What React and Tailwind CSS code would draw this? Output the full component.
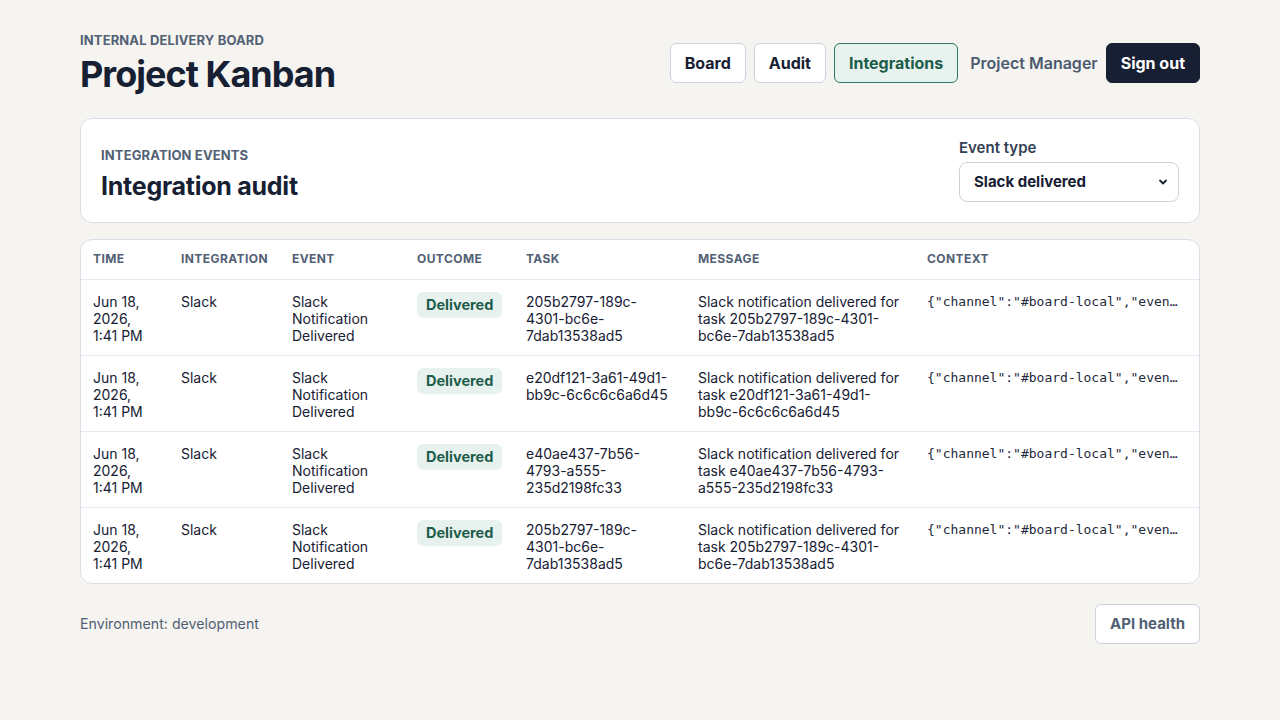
import React from "react";

const rows = [
  {
    task: "205b2797-189c-4301-bc6e-7dab13538ad5",
    taskLines: ["205b2797-189c-", "4301-bc6e-", "7dab13538ad5"],
    msgLines: ["Slack notification delivered for", "task 205b2797-189c-4301-", "bc6e-7dab13538ad5"],
  },
  {
    task: "e20df121-3a61-49d1-bb9c-6c6c6c6a6d45",
    taskLines: ["e20df121-3a61-49d1-", "bb9c-6c6c6c6a6d45"],
    msgLines: ["Slack notification delivered for", "task e20df121-3a61-49d1-", "bb9c-6c6c6c6a6d45"],
  },
  {
    task: "e40ae437-7b56-4793-a555-235d2198fc33",
    taskLines: ["e40ae437-7b56-", "4793-a555-", "235d2198fc33"],
    msgLines: ["Slack notification delivered for", "task e40ae437-7b56-4793-", "a555-235d2198fc33"],
  },
  {
    task: "205b2797-189c-4301-bc6e-7dab13538ad5",
    taskLines: ["205b2797-189c-", "4301-bc6e-", "7dab13538ad5"],
    msgLines: ["Slack notification delivered for", "task 205b2797-189c-4301-", "bc6e-7dab13538ad5"],
  },
];

function Lines({ lines }) {
  return lines.map((l, i) => (
    <div key={i} className="whitespace-nowrap">
      {l}
    </div>
  ));
}

export default function App() {
  return (
    <div
      className="min-h-screen bg-[#f5f4f1] text-[#172033]"
      style={{ fontFamily: "Inter, 'Noto Sans', sans-serif" }}
    >
      <div className="mx-auto w-[1120px] pt-8 pb-10">
        <header className="flex items-center justify-between">
          <div>
            <div className="text-[13px] leading-4 font-bold uppercase tracking-[0.01em] text-[#526074]">
              Internal delivery board
            </div>
            <h1 className="mt-1.5 text-[36px] leading-10 font-bold tracking-[-0.027em] text-[#172033]">
              Project Kanban
            </h1>
          </div>
          <nav className="flex items-center gap-2 text-[16px] font-bold">
            <button className="h-10 px-[14px] rounded-md border border-[#cdd3dc] bg-white text-[#172033]">
              Board
            </button>
            <button className="h-10 px-[14px] rounded-md border border-[#cdd3dc] bg-white text-[#172033]">
              Audit
            </button>
            <button className="h-10 px-[14px] rounded-md border border-[#2f7a66] bg-[#e8f3ef] text-[#1b5c4a]">
              Integrations
            </button>
            <span className="ml-1 text-[#4c5a6e] font-semibold">Project Manager</span>
            <button className="h-10 px-[14px] rounded-md bg-[#172033] text-white border border-[#172033]">
              Sign out
            </button>
          </nav>
        </header>

        <section className="mt-6 flex items-end justify-between rounded-xl border border-[#d8dee8] bg-white px-5 pt-[19px] pb-5">
          <div>
            <div className="text-[13px] leading-4 font-bold uppercase tracking-[0.01em] text-[#526074]">
              Integration events
            </div>
            <h2 className="mt-[7px] text-[25px] leading-8 font-bold tracking-[-0.01em] text-[#172033]">
              Integration audit
            </h2>
          </div>
          <div className="flex flex-col">
            <label className="text-[15px] leading-5 font-semibold text-[#334155]">Event type</label>
            <div className="relative mt-1 h-10 w-[220px] rounded-lg border border-[#cbd2dc] bg-white">
              <div className="flex h-full items-center px-[14px] text-[15px] font-bold text-[#172033]">
                Slack delivered
              </div>
              <svg
                className="absolute right-[10px] top-1/2 -translate-y-1/2"
                width="10"
                height="10"
                viewBox="0 0 10 10"
                fill="none"
              >
                <path d="M2 3.5 L5 6.5 L8 3.5" stroke="#172033" strokeWidth="1.8" strokeLinecap="round" strokeLinejoin="round" />
              </svg>
            </div>
          </div>
        </section>

        <section className="mt-4 overflow-hidden rounded-xl border border-[#d8dee8] bg-white">
          <table className="w-full table-fixed border-collapse text-left">
            <colgroup>
              <col className="w-[88px]" />
              <col className="w-[111px]" />
              <col className="w-[125px]" />
              <col className="w-[109px]" />
              <col className="w-[172px]" />
              <col className="w-[229px]" />
              <col />
            </colgroup>
            <thead>
              <tr className="h-[39px] border-b border-[#e3e7ee]">
                {["Time", "Integration", "Event", "Outcome", "Task", "Message", "Context"].map((h) => (
                  <th
                    key={h}
                    className="px-3 text-[12px] font-bold uppercase tracking-[0.035em] text-[#526074]"
                  >
                    {h}
                  </th>
                ))}
              </tr>
            </thead>
            <tbody className="text-[14px] leading-[17px] text-[#172033]">
              {rows.map((r, i) => (
                <tr key={i} className={i < rows.length - 1 ? "h-[76px] border-b border-[#e3e7ee]" : "h-[76px]"}>
                  <td className="align-top px-3 pt-[13px]">
                    <Lines lines={["Jun 18,", "2026,", "1:41 PM"]} />
                  </td>
                  <td className="align-top px-3 pt-[13px]">Slack</td>
                  <td className="align-top px-3 pt-[13px]">
                    <Lines lines={["Slack", "Notification", "Delivered"]} />
                  </td>
                  <td className="align-top px-3 pt-3">
                    <span className="inline-block rounded-md bg-[#e7f2ee] px-[9px] py-1 text-[14.5px] leading-[18px] font-bold text-[#1b5c4a]">
                      Delivered
                    </span>
                  </td>
                  <td className="align-top px-3 pt-[13px]">
                    <Lines lines={r.taskLines} />
                  </td>
                  <td className="align-top px-3 pt-[13px]">
                    <Lines lines={r.msgLines} />
                  </td>
                  <td className="align-top px-3 pt-[13px]">
                    <div
                      className="w-[253px] truncate text-[13px] leading-[17px] text-[#1e293b]"
                      style={{ fontFamily: "'DejaVu Sans Mono', 'Liberation Mono', monospace" }}
                    >
                      {'{"channel":"#board-local","event":"slack.notification.delivered"}'}
                    </div>
                  </td>
                </tr>
              ))}
            </tbody>
          </table>
        </section>

        <footer className="mt-5 flex items-center justify-between">
          <span className="text-[14.2px] text-[#526074]">Environment: development</span>
          <button className="h-10 px-[14px] rounded-md border border-[#cdd3dc] bg-white text-[15px] font-bold text-[#526074]">
            API health
          </button>
        </footer>
      </div>
    </div>
  );
}
